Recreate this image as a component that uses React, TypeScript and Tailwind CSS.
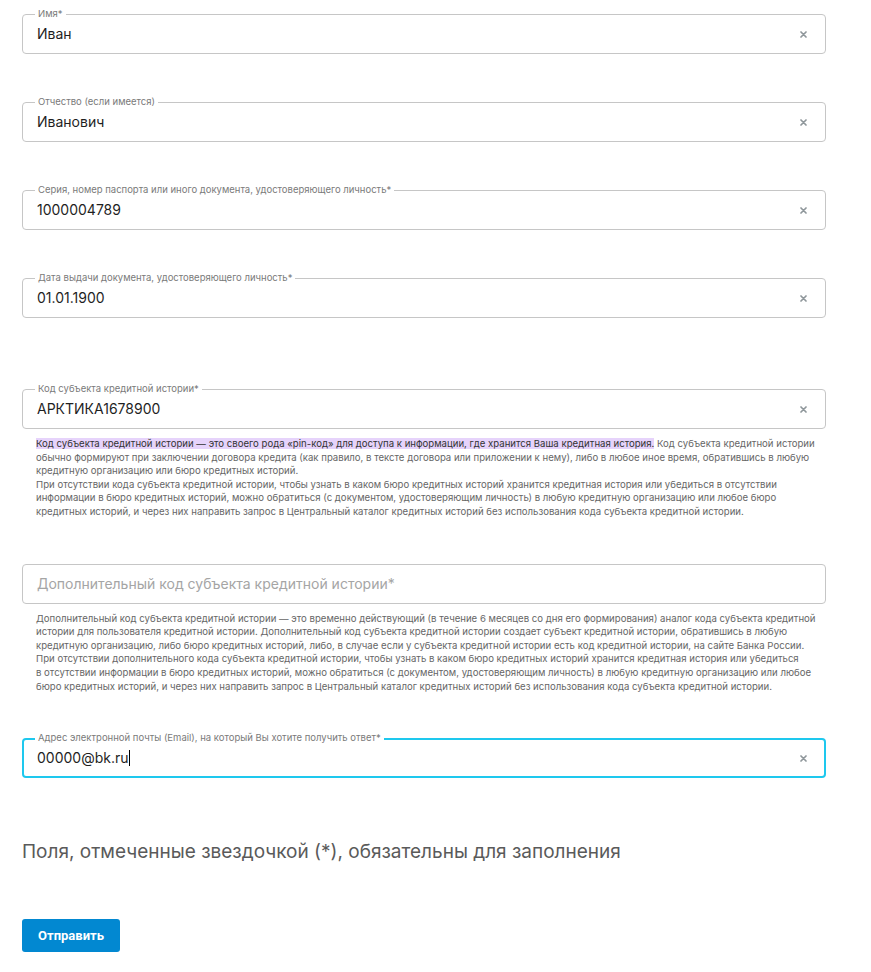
import React from "react"

const font = { fontFamily: "Inter, 'Noto Sans', sans-serif" }

function ClearIcon() {
  return (
    <svg width="7" height="7" viewBox="0 0 7 7" className="shrink-0">
      <path d="M1 1L6 6M6 1L1 6" stroke="#8f979b" strokeWidth="1.7" strokeLinecap="round" />
    </svg>
  )
}

function Field({
  label,
  value,
  placeholder,
  focused,
  className = "",
}: {
  label?: string
  value?: string
  placeholder?: string
  focused?: boolean
  className?: string
}) {
  return (
    <div
      className={
        "relative h-[40px] w-[804px] rounded-[4px] flex items-center " +
        (focused ? "border-2 border-[#1ec8ee] pl-[13px] pr-[17px]" : "border border-[#c6c6c6] pl-[14px] pr-[18px]") +
        " " +
        className
      }
    >
      {label && (
        <span
          className={
            "absolute bg-white px-[3px] text-[9.5px] leading-[10px] text-[#7a7a7a] whitespace-nowrap " +
            (focused ? "top-[-7px] left-[11px]" : "top-[-6px] left-[12px]")
          }
        >
          {label}
        </span>
      )}
      <div className="flex-1 text-[14px] leading-[18px]">
        {value ? (
          <span className="text-[#1f1f1f]">
            {value}
            {focused && <span className="inline-block w-px h-[16px] bg-black align-[-3px]" />}
          </span>
        ) : (
          <span className="text-[#a5a5a5]">{placeholder}</span>
        )}
      </div>
      {value && <ClearIcon />}
    </div>
  )
}

function Help({ lines, highlight }: { lines: string[]; highlight?: string }) {
  return (
    <div className="pl-[14px] text-[9.6px] leading-[13.6px] text-[#666]">
      {lines.map((l, i) =>
        i === 0 && highlight ? (
          <div key={i} className="whitespace-nowrap">
            <span className="bg-[#e6d3fb] text-[#333]">{highlight}</span>
            {l}
          </div>
        ) : (
          <div key={i} className="whitespace-nowrap">
            {l}
          </div>
        )
      )}
    </div>
  )
}

export default function App() {
  return (
    <div className="bg-white w-[871px] min-h-[972px] px-[22px] pt-[14px]" style={font}>
      <Field label="Имя*" value="Иван" />
      <Field label="Отчество (если имеется)" value="Иванович" className="mt-[48px]" />
      <Field
        label="Серия, номер паспорта или иного документа, удостоверяющего личность*"
        value="1000004789"
        className="mt-[48px]"
      />
      <Field
        label="Дата выдачи документа, удостоверяющего личность*"
        value="01.01.1900"
        className="mt-[48px]"
      />
      <Field label="Код субъекта кредитной истории*" value="АРКТИКА1678900" className="mt-[71px]" />
      <div className="mt-[8px]">
        <Help
          highlight="Код субъекта кредитной истории — это своего рода «pin-код» для доступа к информации, где хранится Ваша кредитная история."
          lines={[
            " Код субъекта кредитной истории",
            "обычно формируют при заключении договора кредита (как правило, в тексте договора или приложении к нему), либо в любое иное время, обратившись в любую",
            "кредитную организацию или бюро кредитных историй.",
            "При отсутствии кода субъекта кредитной истории, чтобы узнать в каком бюро кредитных историй хранится кредитная история или убедиться в отсутствии",
            "информации в бюро кредитных историй, можно обратиться (с документом, удостоверяющим личность) в любую кредитную организацию или любое бюро",
            "кредитных историй, и через них направить запрос в Центральный каталог кредитных историй без использования кода субъекта кредитной истории.",
          ]}
        />
      </div>
      <Field placeholder="Дополнительный код субъекта кредитной истории*" className="mt-[45px]" />
      <div className="mt-[8px]">
        <Help
          lines={[
            "Дополнительный код субъекта кредитной истории — это временно действующий (в течение 6 месяцев со дня его формирования) аналог кода субъекта кредитной",
            "истории для пользователя кредитной истории. Дополнительный код субъекта кредитной истории создает субъект кредитной истории, обратившись в любую",
            "кредитную организацию, либо бюро кредитных историй, либо, в случае если у субъекта кредитной истории есть код кредитной истории, на сайте Банка России.",
            "При отсутствии дополнительного кода субъекта кредитной истории, чтобы узнать в каком бюро кредитных историй хранится кредитная история или убедиться",
            "в отсутствии информации в бюро кредитных историй, можно обратиться (с документом, удостоверяющим личность) в любую кредитную организацию или любое",
            "бюро кредитных историй, и через них направить запрос в Центральный каталог кредитных историй без использования кода субъекта кредитной истории.",
          ]}
        />
      </div>
      <Field
        label="Адрес электронной почты (Email), на который Вы хотите получить ответ*"
        value="00000@bk.ru"
        focused
        className="mt-[45px]"
      />
      <p className="mt-[62px] text-[19px] leading-[24px] text-[#5a5a5a]">
        Поля, отмеченные звездочкой (*), обязательны для заполнения
      </p>
      <button
        className="mt-[55px] h-[33px] w-[98px] rounded-[3px] bg-[#0288d1] text-white text-[13px] font-bold"
        style={{ fontFamily: "Roboto, sans-serif" }}
      >
        Отправить
      </button>
    </div>
  )
}
